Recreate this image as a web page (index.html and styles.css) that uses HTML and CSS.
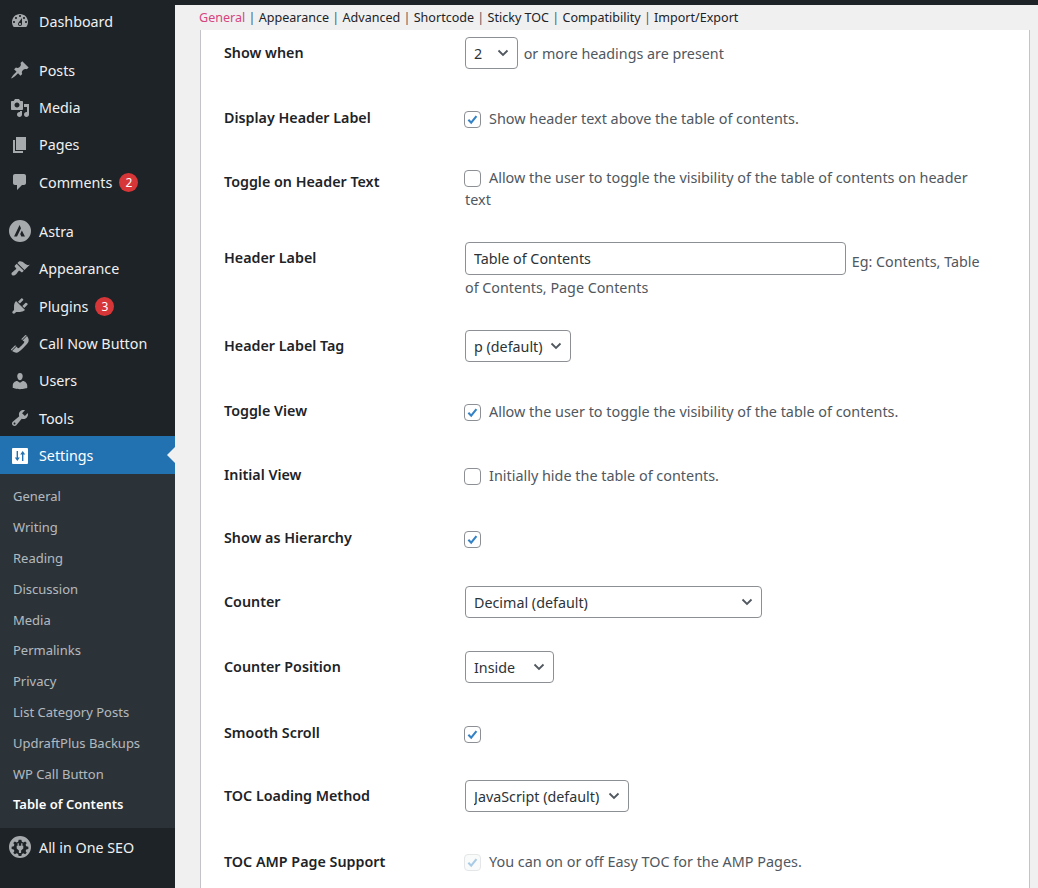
FILE: index.html
```html
<!DOCTYPE html>
<html lang="en">
<head>
    <meta charset="UTF-8" />
    <title>Table of Contents Settings</title>
    <link rel="stylesheet" href="styles.css">
</head>
<body>

<!-- admin menu -->
<nav class="sidebar">
    <a class="menu-item gap-after"><svg viewBox="0 0 20 20"><path d="M3.76 16h12.48c1.1-1.37 1.76-3.11 1.76-5 0-4.42-3.58-8-8-8s-8 3.58-8 8c0 1.89.66 3.63 1.76 5zM10 4c.55 0 1 .45 1 1s-.45 1-1 1-1-.45-1-1 .45-1 1-1zM6 6c.55 0 1 .45 1 1s-.45 1-1 1-1-.45-1-1 .45-1 1-1zm8 0c.55 0 1 .45 1 1s-.45 1-1 1-1-.45-1-1 .45-1 1-1zm-5.37 5.55L12 7v6c0 1.1-.9 2-2 2s-2-.9-2-2c0-.57.24-1.08.63-1.45zM4 10c.55 0 1 .45 1 1s-.45 1-1 1-1-.45-1-1 .45-1 1-1zm12 0c.55 0 1 .45 1 1s-.45 1-1 1-1-.45-1-1 .45-1 1-1zm-5 3c0-.55-.45-1-1-1s-1 .45-1 1 .45 1 1 1 1-.45 1-1z"/></svg>Dashboard</a>
    <a class="menu-item"><svg viewBox="0 0 20 20"><path d="M10.44 3.02l1.82-1.82 6.36 6.35-1.83 1.82c-1.05-.68-2.48-.57-3.41.36l-.75.75c-.92.93-1.04 2.35-.35 3.41l-1.83 1.82-2.41-2.41-2.8 2.79c-.42.42-3.38 2.71-3.8 2.29s1.86-3.39 2.28-3.81l2.79-2.79L4.1 9.36l1.83-1.82c1.05.69 2.48.57 3.4-.36l.75-.75c.93-.92 1.05-2.35.36-3.41z"/></svg>Posts</a>
    <a class="menu-item"><svg viewBox="0 0 20 20"><path d="M13 11V4c0-.55-.45-1-1-1h-1.67L9 1H5L3.67 3H2c-.55 0-1 .45-1 1v7c0 .55.45 1 1 1h10c.55 0 1-.45 1-1zM7 4.5c1.38 0 2.5 1.12 2.5 2.5S8.38 9.5 7 9.5 4.5 8.38 4.5 7 5.62 4.5 7 4.5zM14 6h5v10.5c0 1.38-1.12 2.5-2.5 2.5S14 17.88 14 16.5s1.12-2.5 2.5-2.5c.17 0 .34.02.5.05V9h-3V6zm-4 8.05V13h2v3.5c0 1.38-1.12 2.5-2.5 2.5S7 17.88 7 16.5 8.12 14 9.5 14c.17 0 .34.02.5.05z"/></svg>Media</a>
    <a class="menu-item"><svg viewBox="0 0 20 20"><path d="M6 15V2h10v13H6zm-1 1h8v2H3V5h2v11z"/></svg>Pages</a>
    <a class="menu-item gap-after"><svg viewBox="0 0 20 20"><path d="M5 2h9c1.1 0 2 .9 2 2v7c0 1.1-.9 2-2 2h-2l-5 5v-5H5c-1.1 0-2-.9-2-2V4c0-1.1.9-2 2-2z"/></svg>Comments<span class="badge">2</span></a>
    <a class="menu-item"><svg class="round" viewBox="0 0 20 20"><path fill-rule="evenodd" d="M10 0a10 10 0 1 1 0 20a10 10 0 0 1 0-20zM9.6 4.5L4.6 15h2.7l3.6-7.6zM11.7 9.6l-1.5 3.1l1 2.3h3.3z"/></svg>Astra</a>
    <a class="menu-item"><svg viewBox="0 0 20 20"><path d="M14.48 11.06L7.41 3.99l1.5-1.5c.5-.56 2.3-.47 3.51.32 1.21.8 1.43 1.28 2.91 2.1 1.18.64 2.45 1.26 4.45.85zm-.71.71L6.7 4.7 4.93 6.47c-.39.39-.39 1.02 0 1.41l1.06 1.06c.39.39.39 1.03 0 1.42-.6.6-1.43 1.11-2.21 1.69-.35.26-.7.53-1.01.84C1.43 13.23 1 15.03 2 16c1 1 2.76.58 4.1-.76.3-.31.58-.66.84-1.02.58-.78 1.09-1.61 1.69-2.21.39-.39 1.02-.39 1.41 0l1.06 1.06c.39.39 1.02.39 1.41 0z"/></svg>Appearance</a>
    <a class="menu-item"><svg viewBox="0 0 20 20"><path d="M13.11 4.36L9.87 7.6 8 5.73l3.24-3.24c.35-.34 1.05-.2 1.56.32.52.51.66 1.21.31 1.55zm-8 1.77l.91-1.12 9.01 9.01-1.19.84c-.71.71-2.63 1.16-3.82 1.16H6.14L4.9 17.26c-.59.59-1.54.59-2.12 0-.59-.58-.59-1.53 0-2.12l1.24-1.24v-3.88c0-1.13.4-3.19 1.09-3.89zm7.26 3.97l3.24-3.24c.34-.35 1.04-.21 1.55.31.52.51.66 1.21.31 1.55l-3.24 3.25z"/></svg>Plugins<span class="badge">3</span></a>
    <a class="menu-item"><svg viewBox="0 0 20 20"><path d="M12.06 6l-.21-.2c-.52-.54-.43-.79.08-1.3l2.72-2.75c.81-.82.96-1.21 1.73-.48l.21.2zm.53.45l4.4-4.4c.7.94 2.34 3.47 1.53 5.34-.73 1.67-1.09 1.75-2 3-1.85 2.11-4.18 4.37-6 6.07-1.26.91-1.31 1.33-3 2-1.8.71-4.4-.89-5.38-1.56l4.4-4.4 1.18 1.62c.34.46 1.2-.06 1.8-.66 1.04-1.05 3.18-3.18 4-4.07.59-.59 1.12-1.45.66-1.8zM1.57 16.5l-.21-.21c-.68-.74-.29-.9.52-1.7l2.74-2.72c.51-.49.75-.6 1.27-.11l.2.2z"/></svg>Call Now Button</a>
    <a class="menu-item"><svg viewBox="0 0 20 20"><path d="M10 9.25c-2.27 0-2.73-3.44-2.73-3.44C7 4.02 7.82 2 9.97 2c2.16 0 2.98 2.02 2.71 3.81 0 0-.41 3.44-2.68 3.44zm0 2.57L12.72 10c2.39 0 4.52 2.33 4.52 4.53v2.49s-3.65 1.13-7.24 1.13c-3.65 0-7.24-1.13-7.24-1.13v-2.49c0-2.25 1.94-4.48 4.47-4.48z"/></svg>Users</a>
    <a class="menu-item"><svg viewBox="0 0 20 20"><path d="M16.68 9.77c-1.34 1.34-3.3 1.67-4.95.99l-5.41 6.52c-.99.99-2.59.99-3.58 0s-.99-2.59 0-3.57l6.52-5.42c-.68-1.65-.35-3.61.99-4.95 1.28-1.28 3.12-1.62 4.72-1.06l-2.89 2.89 2.82 2.82 2.86-2.87c.53 1.58.18 3.39-1.08 4.65zM3.81 16.21c.4.39 1.04.39 1.43 0 .4-.4.4-1.04 0-1.43-.39-.4-1.03-.4-1.43 0-.39.39-.39 1.03 0 1.43z"/></svg>Tools</a>
    <a class="menu-item active"><svg viewBox="0 0 20 20"><path fill-rule="evenodd" d="M3 2h14a1 1 0 0 1 1 1v14a1 1 0 0 1-1 1H3a1 1 0 0 1-1-1V3a1 1 0 0 1 1-1zM6.6 5v6.6H4.8l2.5 3.4 2.5-3.4H8V5zM12 15V8.4h-1.8L12.7 5l2.5 3.4h-1.8V15z"/></svg>Settings</a>
    <div class="submenu">
        <a>General</a>
        <a>Writing</a>
        <a>Reading</a>
        <a>Discussion</a>
        <a>Media</a>
        <a>Permalinks</a>
        <a>Privacy</a>
        <a>List Category Posts</a>
        <a>UpdraftPlus Backups</a>
        <a>WP Call Button</a>
        <a class="current">Table of Contents</a>
    </div>
    <a class="menu-item"><svg class="round" viewBox="0 0 20 20"><path fill-rule="evenodd" d="M10 0a10 10 0 1 1 0 20a10 10 0 0 1 0-20zM8.8 3.4l-.5 1.9-1.3.6-1.7-1-1.4 1.4 1 1.7-.6 1.3-1.9.5v2l1.9.5.6 1.3-1 1.7 1.4 1.4 1.7-1 1.3.6.5 1.9h2.4l.5-1.9 1.3-.6 1.7 1 1.4-1.4-1-1.7.6-1.3 1.9-.5v-2l-1.9-.5-.6-1.3 1-1.7-1.4-1.4-1.7 1-1.3-.6-.5-1.9z"/><path d="M7.8 6.6h1.1v2.2h2.2V6.6h1.1v2.2h.8v2.6L11 13.2v2.2H9v-2.2l-2-1.8V8.8h.8z"/></svg>All in One SEO</a>
</nav>

<main class="content">
    <div class="topbar"></div>

    <!-- tabs -->
    <div class="tabs">
        <a class="selected">General</a> <i>|</i>
        <a>Appearance</a> <i>|</i>
        <a>Advanced</a> <i>|</i>
        <a>Shortcode</a> <i>|</i>
        <a>Sticky TOC</a> <i>|</i>
        <a>Compatibility</a> <i>|</i>
        <a>Import/Export</a>
    </div>

    <!-- settings -->
    <section class="card">
        <div class="row h65">
            <div class="label">Show when</div>
            <div class="value">
                <span class="select w53"><select><option>2</option></select><svg viewBox="0 0 12 8"><path d="M1.5 1.5L6 6l4.5-4.5"/></svg></span>
                <span class="after-select">or more headings are present</span>
            </div>
        </div>
        <div class="row h64">
            <div class="label">Display Header Label</div>
            <div class="value text"><span class="check"><svg viewBox="0 0 16 16"><path d="M3.6 8.2l3 3.2 5.6-7"/></svg></span>Show header text above the table of contents.</div>
        </div>
        <div class="row h76">
            <div class="label">Toggle on Header Text</div>
            <div class="value text up"><span class="check"></span>Allow the user to toggle the visibility of the table of contents on header text</div>
        </div>
        <div class="row h88">
            <div class="label">Header Label</div>
            <div class="value text-input"><input type="text" value="Table of Contents"> Eg: Contents, Table of Contents, Page Contents</div>
        </div>
        <div class="row h65">
            <div class="label">Header Label Tag</div>
            <div class="value"><span class="select w106"><select><option>p (default)</option></select><svg viewBox="0 0 12 8"><path d="M1.5 1.5L6 6l4.5-4.5"/></svg></span></div>
        </div>
        <div class="row h64">
            <div class="label">Toggle View</div>
            <div class="value text"><span class="check"><svg viewBox="0 0 16 16"><path d="M3.6 8.2l3 3.2 5.6-7"/></svg></span>Allow the user to toggle the visibility of the table of contents.</div>
        </div>
        <div class="row h63">
            <div class="label">Initial View</div>
            <div class="value text"><span class="check"></span>Initially hide the table of contents.</div>
        </div>
        <div class="row h64">
            <div class="label">Show as Hierarchy</div>
            <div class="value text"><span class="check"><svg viewBox="0 0 16 16"><path d="M3.6 8.2l3 3.2 5.6-7"/></svg></span></div>
        </div>
        <div class="row h65">
            <div class="label">Counter</div>
            <div class="value"><span class="select w297"><select><option>Decimal (default)</option></select><svg viewBox="0 0 12 8"><path d="M1.5 1.5L6 6l4.5-4.5"/></svg></span></div>
        </div>
        <div class="row h66">
            <div class="label">Counter Position</div>
            <div class="value"><span class="select w89"><select><option>Inside</option></select><svg viewBox="0 0 12 8"><path d="M1.5 1.5L6 6l4.5-4.5"/></svg></span></div>
        </div>
        <div class="row h63">
            <div class="label">Smooth Scroll</div>
            <div class="value text"><span class="check"><svg viewBox="0 0 16 16"><path d="M3.6 8.2l3 3.2 5.6-7"/></svg></span></div>
        </div>
        <div class="row h66">
            <div class="label">TOC Loading Method</div>
            <div class="value"><span class="select w164"><select><option>JavaScript (default)</option></select><svg viewBox="0 0 12 8"><path d="M1.5 1.5L6 6l4.5-4.5"/></svg></span></div>
        </div>
        <div class="row">
            <div class="label">TOC AMP Page Support</div>
            <div class="value text last"><span class="check disabled"><svg viewBox="0 0 16 16"><path d="M3.6 8.2l3 3.2 5.6-7"/></svg></span>You can on or off Easy TOC for the AMP Pages.</div>
        </div>
    </section>
</main>

</body>
</html>
```

FILE: styles.css
```css
* {
    box-sizing: border-box;
}

html, body {
    height: 100%;
}

body {
    margin: 0;
    display: flex;
    overflow: hidden;
    background: #f0f0f1;
    color: #50575e;
    font-family: "Noto Sans", "Open Sans", sans-serif;
    font-size: 14.3px;
}

/* admin menu */
.sidebar {
    width: 175px;
    flex-shrink: 0;
    padding-top: 2px;
    background: #1d2327;
}

.menu-item {
    display: flex;
    align-items: center;
    height: 37.4px;
    padding: 1px 0 0 10px;
    color: #f0f0f1;
}

.menu-item svg {
    width: 20px;
    height: 20px;
    margin-right: 9px;
    fill: #a7aaad;
}

.menu-item svg.round {
    width: 22px;
    height: 22px;
    margin: 0 8px 0 -1px;
}

.gap-after {
    margin-bottom: 11.6px;
}

.menu-item.active {
    position: relative;
    background: #2271b1;
    color: #fff;
}

.menu-item.active svg {
    fill: #fff;
}

.menu-item.active::after {
    content: "";
    position: absolute;
    right: 0;
    top: 50%;
    margin-top: -8px;
    border: 8px solid transparent;
    border-right-color: #f0f0f1;
}

.badge {
    width: 19px;
    height: 19px;
    margin-left: 7px;
    border-radius: 50%;
    background: #d63638;
    color: #fff;
    font-size: 12px;
    line-height: 19px;
    text-align: center;
}

.submenu {
    padding: 7.6px 0;
    background: #2c3338;
    font-size: 13px;
}

.submenu a {
    display: block;
    height: 30.8px;
    padding-left: 13px;
    line-height: 30.8px;
    color: rgba(240, 246, 252, 0.7);
}

.submenu a.current {
    color: #fff;
    font-weight: 600;
}

/* content */
.content {
    flex: 1;
    display: flex;
    flex-direction: column;
    min-width: 0;
}

.topbar {
    height: 5px;
    flex-shrink: 0;
    background: #1d2327;
}

.tabs {
    height: 25px;
    flex-shrink: 0;
    padding-left: 24px;
    font-size: 12.55px;
    line-height: 25px;
    color: #1d2327;
}

.tabs a.selected {
    color: #d6457f;
}

.tabs i {
    font-style: normal;
    color: #50575e;
}

.card {
    flex: 1;
    margin: 0 8px 0 25px;
    padding: 7px 44px 0 23px;
    background: #fff;
    border-left: 1px solid #c3c4c7;
    border-right: 1px solid #c3c4c7;
}

.row {
    display: grid;
    grid-template-columns: 241px 1fr;
    align-items: start;
}

.h63 { height: 63px; }
.h64 { height: 64px; }
.h65 { height: 65px; }
.h66 { height: 66px; }
.h76 { height: 76px; }
.h88 { height: 88px; }

.label {
    line-height: 32px;
    color: #1d2327;
    font-weight: 600;
}

.value.text {
    padding-top: 6px;
    font-size: 14.4px;
    line-height: 22px;
}

.value.up {
    padding-top: 1px;
}

.value.last {
    padding-top: 5px;
}

.check {
    display: inline-block;
    width: 17px;
    height: 17px;
    margin: 0 8px 0 -1px;
    vertical-align: -4px;
    background: #fff;
    border: 1px solid #8c8f94;
    border-radius: 4px;
}

.check svg {
    display: block;
    width: 15px;
    height: 15px;
    fill: none;
    stroke: #3582c4;
    stroke-width: 2.2;
}

.check.disabled {
    border-color: #e4e6e8;
    background: #f9fafa;
}

.check.disabled svg {
    stroke: #a9cbe6;
}

.select {
    position: relative;
    display: inline-block;
    height: 32px;
    vertical-align: middle;
}

.select select {
    display: block;
    width: 100%;
    height: 32px;
    padding: 0 24px 0 8px;
    appearance: none;
    background: #fff;
    border: 1px solid #8c8f94;
    border-radius: 4px;
    color: #2c3338;
    font: inherit;
}

.select svg {
    position: absolute;
    right: 9px;
    top: 12px;
    width: 12px;
    height: 8px;
    fill: none;
    stroke: #50575e;
    stroke-width: 1.8;
    pointer-events: none;
}

.w53 { width: 53px; }
.w89 { width: 89px; }
.w106 { width: 106px; }
.w164 { width: 164px; }
.w297 { width: 297px; }

.after-select {
    margin-left: 2px;
    vertical-align: middle;
}

.value.text-input {
    line-height: 26px;
}

.text-input input {
    width: 381px;
    height: 33px;
    margin-right: 2px;
    padding: 0 8px;
    background: #fff;
    border: 1px solid #8c8f94;
    border-radius: 4px;
    color: #2c3338;
    font: inherit;
    vertical-align: 3px;
}
```
